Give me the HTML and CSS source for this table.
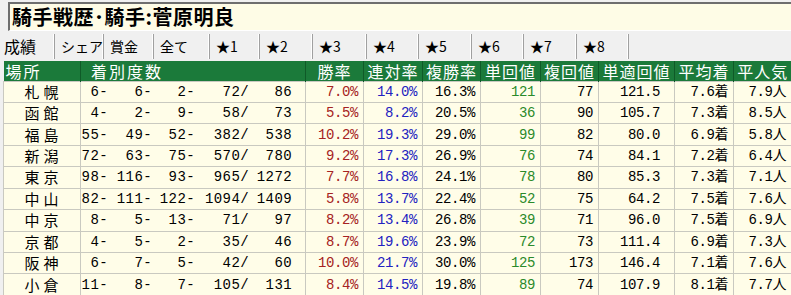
FILE: index.html
```html
<!DOCTYPE html>
<html lang="ja">
<head>
<meta charset="utf-8">
<link rel="stylesheet" href="styles.css">
</head>
<body>
<div class="title">騎手戦歴･騎手:菅原明良</div>
<div class="tabs">
  <div class="tab active w55">成績</div>
  <div class="tab w49">シェア</div>
  <div class="tab w50">賞金</div>
  <div class="tab w56">全て</div>
  <div class="tab w50">★1</div>
  <div class="tab w53">★2</div>
  <div class="tab w54">★3</div>
  <div class="tab w52">★4</div>
  <div class="tab w53">★5</div>
  <div class="tab w52">★6</div>
  <div class="tab w53">★7</div>
  <div class="tab w52">★8</div>
</div>
<table class="grid">
  <colgroup>
    <col class="c1"><col class="c2"><col class="c3"><col class="c4"><col class="c5">
    <col class="c6"><col class="c7"><col class="c8"><col class="c9"><col class="c10">
  </colgroup>
  <thead>
    <tr>
      <th class="h-left">場所</th><th class="h-left2">着別度数</th><th>勝率</th><th>連対率</th><th>複勝率</th><th>単回値</th><th>複回値</th><th>単適回値</th><th>平均着</th><th>平人気</th>
    </tr>
  </thead>
  <tbody>
    <tr><td class="place">札幌</td><td class="rec"><span class="f1">6-</span><span class="f2">6-</span><span class="f3">2-</span><span class="f4">72/</span><span class="f5">86</span></td><td class="win">7.0%</td><td class="ren">14.0%</td><td class="num">16.3%</td><td class="tan">121</td><td class="num">77</td><td class="num tk">121.5</td><td class="num">7.6着</td><td class="num">7.9人</td></tr>
    <tr><td class="place">函館</td><td class="rec"><span class="f1">4-</span><span class="f2">2-</span><span class="f3">9-</span><span class="f4">58/</span><span class="f5">73</span></td><td class="win">5.5%</td><td class="ren">8.2%</td><td class="num">20.5%</td><td class="tan">36</td><td class="num">90</td><td class="num tk">105.7</td><td class="num">7.3着</td><td class="num">8.5人</td></tr>
    <tr><td class="place">福島</td><td class="rec"><span class="f1">55-</span><span class="f2">49-</span><span class="f3">52-</span><span class="f4">382/</span><span class="f5">538</span></td><td class="win">10.2%</td><td class="ren">19.3%</td><td class="num">29.0%</td><td class="tan">99</td><td class="num">82</td><td class="num tk">80.0</td><td class="num">6.9着</td><td class="num">5.8人</td></tr>
    <tr><td class="place">新潟</td><td class="rec"><span class="f1">72-</span><span class="f2">63-</span><span class="f3">75-</span><span class="f4">570/</span><span class="f5">780</span></td><td class="win">9.2%</td><td class="ren">17.3%</td><td class="num">26.9%</td><td class="tan">76</td><td class="num">74</td><td class="num tk">84.1</td><td class="num">7.2着</td><td class="num">6.4人</td></tr>
    <tr><td class="place">東京</td><td class="rec"><span class="f1">98-</span><span class="f2">116-</span><span class="f3">93-</span><span class="f4">965/</span><span class="f5">1272</span></td><td class="win">7.7%</td><td class="ren">16.8%</td><td class="num">24.1%</td><td class="tan">78</td><td class="num">80</td><td class="num tk">85.3</td><td class="num">7.3着</td><td class="num">7.1人</td></tr>
    <tr><td class="place">中山</td><td class="rec"><span class="f1">82-</span><span class="f2">111-</span><span class="f3">122-</span><span class="f4">1094/</span><span class="f5">1409</span></td><td class="win">5.8%</td><td class="ren">13.7%</td><td class="num">22.4%</td><td class="tan">52</td><td class="num">75</td><td class="num tk">64.2</td><td class="num">7.5着</td><td class="num">7.6人</td></tr>
    <tr><td class="place">中京</td><td class="rec"><span class="f1">8-</span><span class="f2">5-</span><span class="f3">13-</span><span class="f4">71/</span><span class="f5">97</span></td><td class="win">8.2%</td><td class="ren">13.4%</td><td class="num">26.8%</td><td class="tan">39</td><td class="num">71</td><td class="num tk">96.0</td><td class="num">7.5着</td><td class="num">6.9人</td></tr>
    <tr><td class="place">京都</td><td class="rec"><span class="f1">4-</span><span class="f2">5-</span><span class="f3">2-</span><span class="f4">35/</span><span class="f5">46</span></td><td class="win">8.7%</td><td class="ren">19.6%</td><td class="num">23.9%</td><td class="tan">72</td><td class="num">73</td><td class="num tk">111.4</td><td class="num">6.9着</td><td class="num">7.3人</td></tr>
    <tr><td class="place">阪神</td><td class="rec"><span class="f1">6-</span><span class="f2">7-</span><span class="f3">5-</span><span class="f4">42/</span><span class="f5">60</span></td><td class="win">10.0%</td><td class="ren">21.7%</td><td class="num">30.0%</td><td class="tan">125</td><td class="num">173</td><td class="num tk">146.4</td><td class="num">7.1着</td><td class="num">7.6人</td></tr>
    <tr><td class="place">小倉</td><td class="rec"><span class="f1">11-</span><span class="f2">8-</span><span class="f3">7-</span><span class="f4">105/</span><span class="f5">131</span></td><td class="win">8.4%</td><td class="ren">14.5%</td><td class="num">19.8%</td><td class="tan">89</td><td class="num">74</td><td class="num tk">107.9</td><td class="num">8.1着</td><td class="num">7.7人</td></tr>
  </tbody>
</table>
</body>
</html>
```

FILE: styles.css
```css
html, body {
  margin: 0;
  padding: 0;
  background: #f0f0f0;
  overflow: hidden;
}
body {
  width: 791px;
  height: 295px;
  font-family: "Liberation Mono", "Noto Sans CJK JP", monospace;
}
.title {
  margin: 2px 0 0 8px;
  height: 26px;
  background: #fefce6;
  border-top: 2px solid #6e6e6e;
  border-left: 2px solid #6e6e6e;
  border-bottom: 1px solid #ffffff;
  padding-left: 2px;
  font-family: "Noto Sans CJK JP", sans-serif;
  font-weight: 700;
  font-size: 20px;
  line-height: 26px;
  color: #000;
  letter-spacing: 0.5px;
}
.tabs {
  display: flex;
  margin-top: 3px;
  height: 25px;
  align-items: stretch;
}
.tab {
  box-sizing: border-box;
  border-right: 1px solid #a0a0a0;
  box-shadow: inset -1px 0 0 #ffffff;
  font-family: "Noto Sans CJK JP", sans-serif;
  font-size: 14px;
  line-height: 25px;
  padding-left: 6px;
  color: #000;
  white-space: nowrap;
  overflow: hidden;
}
.tab.active {
  padding-left: 4px;
  font-size: 16px;
}
.w49 { width: 49px; }
.w50 { width: 50px; }
.w52 { width: 52px; }
.w53 { width: 53px; }
.w54 { width: 54px; }
.w55 { width: 55px; }
.w56 { width: 56px; }
.grid {
  margin: 2px 0 0 3px;
  border-collapse: collapse;
  table-layout: fixed;
  width: 788px;
}
.c1 { width: 77px; }
.c2 { width: 225px; }
.c3 { width: 58px; }
.c4 { width: 59px; }
.c5 { width: 58px; }
.c6 { width: 60px; }
.c7 { width: 58px; }
.c8 { width: 76px; }
.c9 { width: 59px; }
.c10 { width: 58px; }
thead tr { height: 20px; }
tbody tr { height: 21.44px; }
th {
  background: #1b7a3a;
  color: #ffffff;
  font-family: "Noto Sans CJK JP", sans-serif;
  font-weight: 400;
  font-size: 16px;
  letter-spacing: 1px;
  line-height: 18px;
  padding: 0;
  text-align: center;
  border-left: 1px solid #0f5a28;
  white-space: nowrap;
}
th.h-left { text-align: left; padding-left: 2px; border-left: none; letter-spacing: 2px; }
th.h-left2 { text-align: left; padding-left: 10px; letter-spacing: 2px; }
td {
  background: #fffde8;
  border: 1px solid #c9c9c0;
  padding: 0 5px 0 0;
  font-size: 14px;
  letter-spacing: -0.4px;
  line-height: 16px;
  text-align: right;
  white-space: pre;
  color: #000;
}
td.place {
  text-align: center;
  padding: 0;
  font-family: "Noto Sans CJK JP", sans-serif;
  font-size: 15px;
  line-height: 16px;
  letter-spacing: 4px;
  text-indent: 3px;
}
td.rec {
  text-align: left;
  padding: 0;
  letter-spacing: 0.4px;
}
.rec span {
  display: inline-block;
  text-align: right;
}
.f1 { width: 27px; }
.f2 { width: 44px; }
.f3 { width: 43px; }
.f4 { width: 54px; }
.f5 { width: 43px; }
.win { color: #a52222; }
.ren { color: #2222c0; }
.tan { color: #2a8a2a; }
td.tk { padding-right: 14px; }
```
